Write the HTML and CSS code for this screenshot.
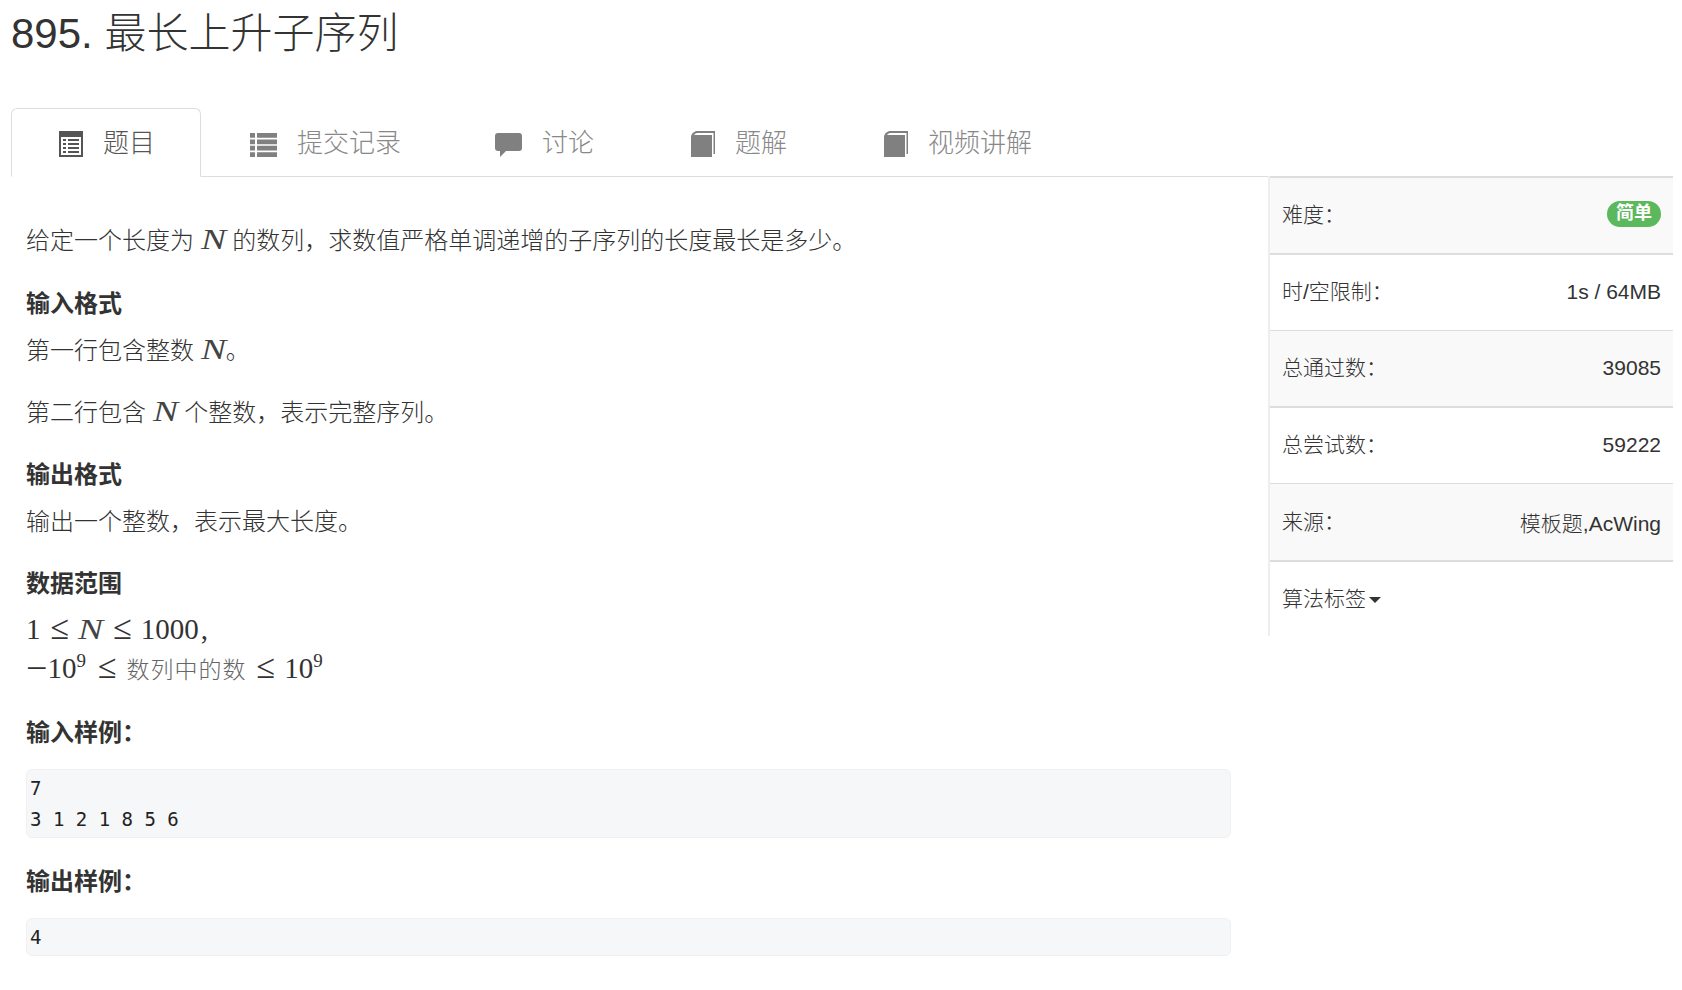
FILE: index.html
```html
<!DOCTYPE html>
<html lang="zh-CN">
<head>
    <meta charset="UTF-8">
    <title>895. 最长上升子序列</title>
    <link rel="stylesheet" href="styles.css">
</head>
<body>
    <div class="problem-page">
        <h1 class="problem-title">895. 最长上升子序列</h1>

        <ul class="tab-bar">
            <li class="tab active">
                <svg class="tab-icon icon-narrow" viewBox="0 0 24 26"><path fill-rule="evenodd" d="M0 0h24v26H0zM2 6v18h20V6zM4 8h3v2H4zM9 8h11v2H9zM4 12h3v2H4zM9 12h11v2H9zM4 16h3v2H4zM9 16h11v2H9zM4 20h3v2H4zM9 20h11v2H9z"/></svg>
                <span class="tab-text">题目</span>
            </li>
            <li class="tab">
                <svg class="tab-icon" viewBox="0 0 27 26"><path d="M0 2h5v4.8H0zM7 2h20v4.8H7zM0 8.4h5v4.8H0zM7 8.4h20v4.8H7zM0 14.8h5v4.8H0zM7 14.8h20v4.8H7zM0 21.2h5V26H0zM7 21.2h20V26H7z"/></svg>
                <span class="tab-text">提交记录</span>
            </li>
            <li class="tab">
                <svg class="tab-icon" viewBox="0 0 27 26"><path d="M3 2h21q3 0 3 3v12q0 3-3 3H11l-6 6v-6H3q-3 0-3-3V5q0-3 3-3z"/></svg>
                <span class="tab-text">讨论</span>
            </li>
            <li class="tab">
                <svg class="tab-icon" viewBox="-2 0 27 26"><path d="M1 6Q1 2 6 0h19v23h-1.5V2H7Q5 2.500 4 4h18v22H1z"/></svg>
                <span class="tab-text">题解</span>
            </li>
            <li class="tab">
                <svg class="tab-icon" viewBox="-2 0 27 26"><path d="M1 6Q1 2 6 0h19v23h-1.5V2H7Q5 2.500 4 4h18v22H1z"/></svg>
                <span class="tab-text">视频讲解</span>
            </li>
        </ul>

        <div class="problem-body">
            <div class="statement">
                <p class="intro">给定一个长度为 <span class="math-var">N</span> 的数列，求数值严格单调递增的子序列的长度最长是多少。</p>

                <h4>输入格式</h4>
                <p>第一行包含整数 <span class="math-var">N</span>。</p>
                <p>第二行包含 <span class="math-var">N</span> 个整数，表示完整序列。</p>

                <h4>输出格式</h4>
                <p>输出一个整数，表示最大长度。</p>

                <h4>数据范围</h4>
                <p class="math-block">
                    <span class="math-line">1<span class="rel">≤</span><span class="math-var">N</span><span class="rel">≤</span>1000<span class="math-comma">,</span></span>
                    <span class="math-line"><span class="math-minus">−</span>10<sup>9</sup><span class="rel">≤</span><span class="math-text">数列中的数</span><span class="rel">≤</span>10<sup>9</sup></span>
                </p>

                <h4>输入样例：</h4>
                <pre class="sample">7
3 1 2 1 8 5 6</pre>

                <h4>输出样例：</h4>
                <pre class="sample">4</pre>
            </div>

            <div class="info-panel">
                <div class="info-row thick striped">
                    <span class="info-label">难度：</span>
                    <span class="badge">简单</span>
                </div>
                <div class="info-row thick">
                    <span class="info-label">时/空限制：</span>
                    <span>1s / 64MB</span>
                </div>
                <div class="info-row striped">
                    <span class="info-label">总通过数：</span>
                    <span>39085</span>
                </div>
                <div class="info-row thick">
                    <span class="info-label">总尝试数：</span>
                    <span>59222</span>
                </div>
                <div class="info-row striped">
                    <span class="info-label">来源：</span>
                    <span>模板题,AcWing</span>
                </div>
                <div class="info-row thick">
                    <span class="info-label">算法标签<i class="caret"></i></span>
                </div>
            </div>
        </div>
    </div>
</body>
</html>
```

FILE: styles.css
```css
* {
    box-sizing: border-box;
}

body {
    margin: 0;
    background-color: white;
    color: #333;
    font-family: "Liberation Sans", "Noto Sans CJK SC", sans-serif;
    font-size: 24px;
    font-weight: 300;
}

.problem-page {
    padding: 0 9px 0 11px;
}

.problem-title {
    margin: 0;
    height: 108px;
    padding-top: 10px;
    font-size: 42px;
    line-height: 48px;
    font-weight: 300;
}

.tab-bar {
    display: flex;
    gap: 1px;
    margin: 0;
    padding: 0;
    height: 69px;
    list-style: none;
    border-bottom: 1px solid #ddd;
}

.tab {
    display: flex;
    align-items: flex-start;
    gap: 20px;
    height: 69px;
    padding: 22px 44px 0 47px;
    border: 1px solid transparent;
    border-radius: 6px 6px 0 0;
    color: #888;
    font-size: 26px;
}

.tab.active {
    padding-right: 45px;
    border-color: #ddd;
    border-bottom-color: white;
    color: #555;
}

.tab-text {
    line-height: 24px;
}

.tab-icon {
    width: 27px;
    height: 26px;
    fill: #808080;
    flex-shrink: 0;
}

.tab-icon.icon-narrow {
    width: 24px;
}

.tab.active .tab-icon {
    fill: #555;
}

.problem-body {
    display: flex;
}

.statement {
    flex: 1;
    min-width: 0;
    padding: 46px 37px 0 15px;
}

.statement p {
    margin: 0 0 27px;
    line-height: 35px;
}

.statement .intro {
    margin-bottom: 28px;
}

.statement h4 {
    margin: 0 0 11px;
    font-size: 24px;
    line-height: 36px;
    font-weight: 700;
}

.math-var {
    display: inline-block;
    width: 25px;
    color: #444;
    font-family: "Liberation Serif", serif;
    font-style: italic;
    font-size: 29px;
    line-height: 1;
    transform: scaleX(1.3);
    transform-origin: left;
}

.statement .math-block {
    margin-top: -3px;
    margin-bottom: 27px;
    font-family: "Liberation Serif", serif;
    font-size: 29px;
    line-height: 38px;
}

.math-line {
    display: block;
    height: 39px;
}

.math-minus {
    font-size: 38px;
    line-height: 0;
    vertical-align: -3px;
}

.rel {
    margin: 0 9px 0 10px;
    font-size: 34px;
    line-height: 1;
}

.math-comma {
    margin-left: 2px;
}

.math-block sup {
    margin-right: 2px;
    font-size: 19px;
    line-height: 0;
}

.math-text {
    margin-left: 1px;
    font-family: "Noto Sans CJK SC", sans-serif;
    font-size: 23px;
    color: #666;
    letter-spacing: 1px;
}

.sample {
    margin: 18px 0 26px;
    padding: 3px 3px 2px;
    background-color: #f6f7f9;
    border: 1px solid #f0f0f0;
    border-radius: 6px;
    color: #222;
    font-family: "DejaVu Sans Mono", monospace;
    font-size: 19px;
    line-height: 31px;
}

.info-panel {
    width: 405px;
    height: 460px;
    margin-top: -1px;
    border-left: 2px solid #eee;
    flex-shrink: 0;
    font-size: 21px;
}

.info-row {
    display: flex;
    align-items: center;
    justify-content: space-between;
    height: 76.8px;
    padding: 0 12px 1px;
    border-top: 1px solid #ddd;
}

.info-row.thick {
    border-top-width: 2px;
}

.info-row.striped {
    background-color: #f9f9f9;
}

.info-label {
    margin-bottom: 4px;
}

.badge {
    padding: 0 9px;
    height: 26px;
    margin-top: -1px;
    border-radius: 13px;
    background-color: #5cb85c;
    color: white;
    font-size: 18px;
    line-height: 24px;
    font-weight: 700;
}

.caret {
    display: inline-block;
    margin-left: 3px;
    vertical-align: middle;
    border-top: 6px solid #333;
    border-left: 6px solid transparent;
    border-right: 6px solid transparent;
}
```
